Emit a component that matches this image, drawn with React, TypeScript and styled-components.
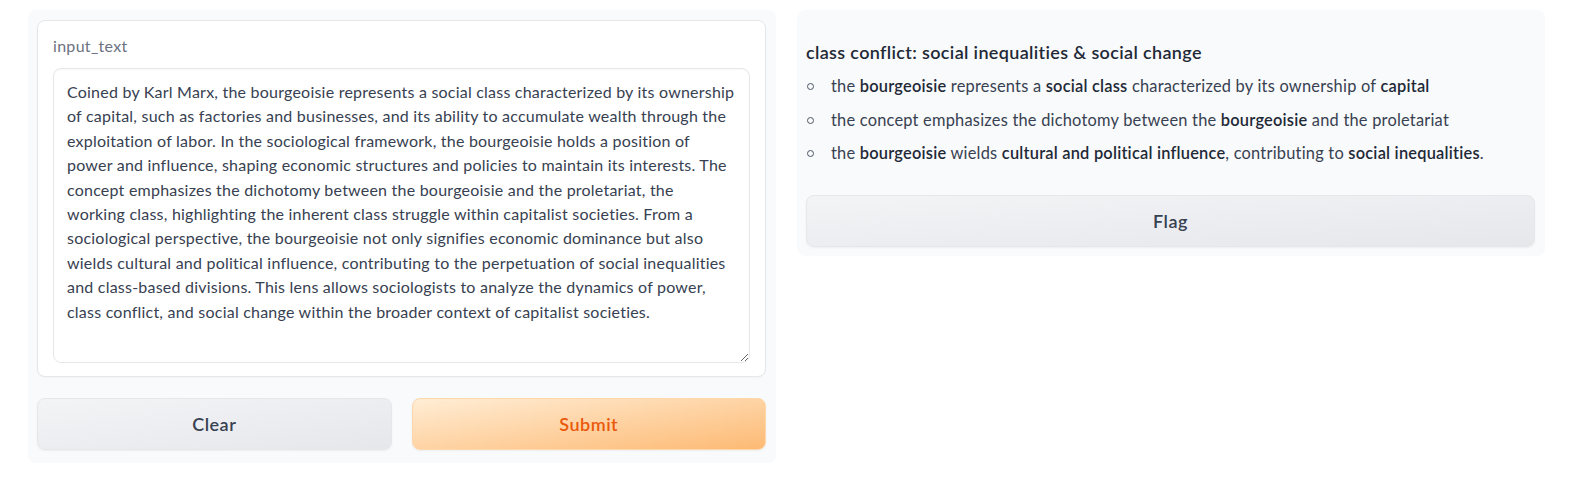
import React, { useState } from "react";
import styled, { createGlobalStyle } from "styled-components";

const GlobalStyle = createGlobalStyle`
  body {
    margin: 0;
    background: #ffffff;
    font-family: "Source Sans Pro", Lato, "Liberation Sans", sans-serif;
    color: #374151;
  }
`;

const Page = styled.div`
  display: grid;
  grid-template-columns: 748px 748px;
  column-gap: 21px;
  align-items: start;
  padding: 10px 25px 0 28px;
`;

const Panel = styled.div`
  background: #f9fafb;
  border-radius: 8px;
  padding: 10px 10px 13px 9px;
  display: flex;
  flex-direction: column;
  gap: 21px;
`;

const Card = styled.div`
  background: #ffffff;
  border: 1px solid #e5e7eb;
  border-radius: 8px;
  padding: 13px 15px 13px 15px;
  box-shadow: 0 1px 2px rgba(0, 0, 0, 0.03);
`;

const Label = styled.label`
  display: block;
  font-size: 16px;
  letter-spacing: 0.3px;
  line-height: 24px;
  color: #6b7280;
  margin-bottom: 10px;
`;

const TextBox = styled.textarea`
  display: block;
  box-sizing: border-box;
  width: 100%;
  height: 295px;
  padding: 11px 6px 11px 13px;
  border: 1px solid #e5e7eb;
  border-radius: 8px;
  font-family: inherit;
  font-size: 16px;
  letter-spacing: 0.22px;
  line-height: 24.4px;
  color: #374151;
  background: #ffffff;
  outline: none;
  resize: vertical;
  box-shadow: inset 0 1px 2px rgba(0, 0, 0, 0.03);
`;

const ButtonRow = styled.div`
  display: grid;
  grid-template-columns: 1fr 1fr;
  gap: 20px;
`;

const Button = styled.button<{ $primary?: boolean }>`
  height: 52px;
  border-radius: 8px;
  font-family: inherit;
  font-size: 18px;
  font-weight: 600;
  letter-spacing: 0.5px;
  cursor: pointer;
  border: 1px solid ${(p) => (p.$primary ? "#fed7aa" : "#e5e7eb")};
  color: ${(p) => (p.$primary ? "#ea580c" : "#374151")};
  background: ${(p) =>
    p.$primary
      ? "linear-gradient(to bottom right, #ffedd5, #fdba74)"
      : "linear-gradient(to bottom right, #f3f4f6, #e5e7eb)"};
  box-shadow: 0 1px 2px rgba(0, 0, 0, 0.05);
`;

const OutputPanel = styled(Panel)`
  padding: 9px 10px 9px 9px;
  gap: 0;
`;

const Markdown = styled.div`
  padding: 21px 0 30px 0;
  font-size: 16.4px;
  letter-spacing: 0.22px;
  line-height: 24px;
  color: #374151;
`;

const Heading = styled.p`
  margin: 0 0 10px 0;
  font-size: 18px;
  letter-spacing: 0.35px;
  font-weight: 600;
  color: #1f2937;
`;

const List = styled.ul`
  margin: 0;
  padding: 0;
  list-style: none;

  strong {
    font-weight: 600;
    color: #1f2937;
  }
`;

const Item = styled.li`
  margin-bottom: 9.5px;

  &:last-child {
    margin-bottom: 0;
  }

  &::before {
    content: "";
    display: inline-block;
    box-sizing: border-box;
    width: 7px;
    height: 7px;
    margin: 0 17px 0 1px;
    border: 1.3px solid #4b5563;
    border-radius: 50%;
    vertical-align: 2px;
  }
`;

// the lines as they wrap in the original box
const initialText = [
  "Coined by Karl Marx, the bourgeoisie represents a social class characterized by its ownership",
  "of capital, such as factories and businesses, and its ability to accumulate wealth through the",
  "exploitation of labor. In the sociological framework, the bourgeoisie holds a position of",
  "power and influence, shaping economic structures and policies to maintain its interests. The",
  "concept emphasizes the dichotomy between the bourgeoisie and the proletariat, the",
  "working class, highlighting the inherent class struggle within capitalist societies. From a",
  "sociological perspective, the bourgeoisie not only signifies economic dominance but also",
  "wields cultural and political influence, contributing to the perpetuation of social inequalities",
  "and class-based divisions. This lens allows sociologists to analyze the dynamics of power,",
  "class conflict, and social change within the broader context of capitalist societies.",
].join("\n");

export default function App(): JSX.Element {
  const [text, setText] = useState<string>(initialText);

  return (
    <>
      <GlobalStyle />
      <Page>
        <Panel>
          <Card>
            <Label htmlFor="input_text">input_text</Label>
            <TextBox
              id="input_text"
              value={text}
              onChange={(e) => setText(e.target.value)}
            />
          </Card>
          <ButtonRow>
            <Button onClick={() => setText("")}>Clear</Button>
            <Button $primary>Submit</Button>
          </ButtonRow>
        </Panel>
        <OutputPanel>
          <Markdown>
            <Heading>class conflict: social inequalities &amp; social change</Heading>
            <List>
              <Item>
                the <strong>bourgeoisie</strong> represents a <strong>social class</strong> characterized by its ownership of <strong>capital</strong>
              </Item>
              <Item>
                the concept emphasizes the dichotomy between the <strong>bourgeoisie</strong> and the proletariat
              </Item>
              <Item>
                the <strong>bourgeoisie</strong> wields <strong>cultural and political influence</strong>, contributing to <strong>social inequalities</strong>.
              </Item>
            </List>
          </Markdown>
          <Button>Flag</Button>
        </OutputPanel>
      </Page>
    </>
  );
}
